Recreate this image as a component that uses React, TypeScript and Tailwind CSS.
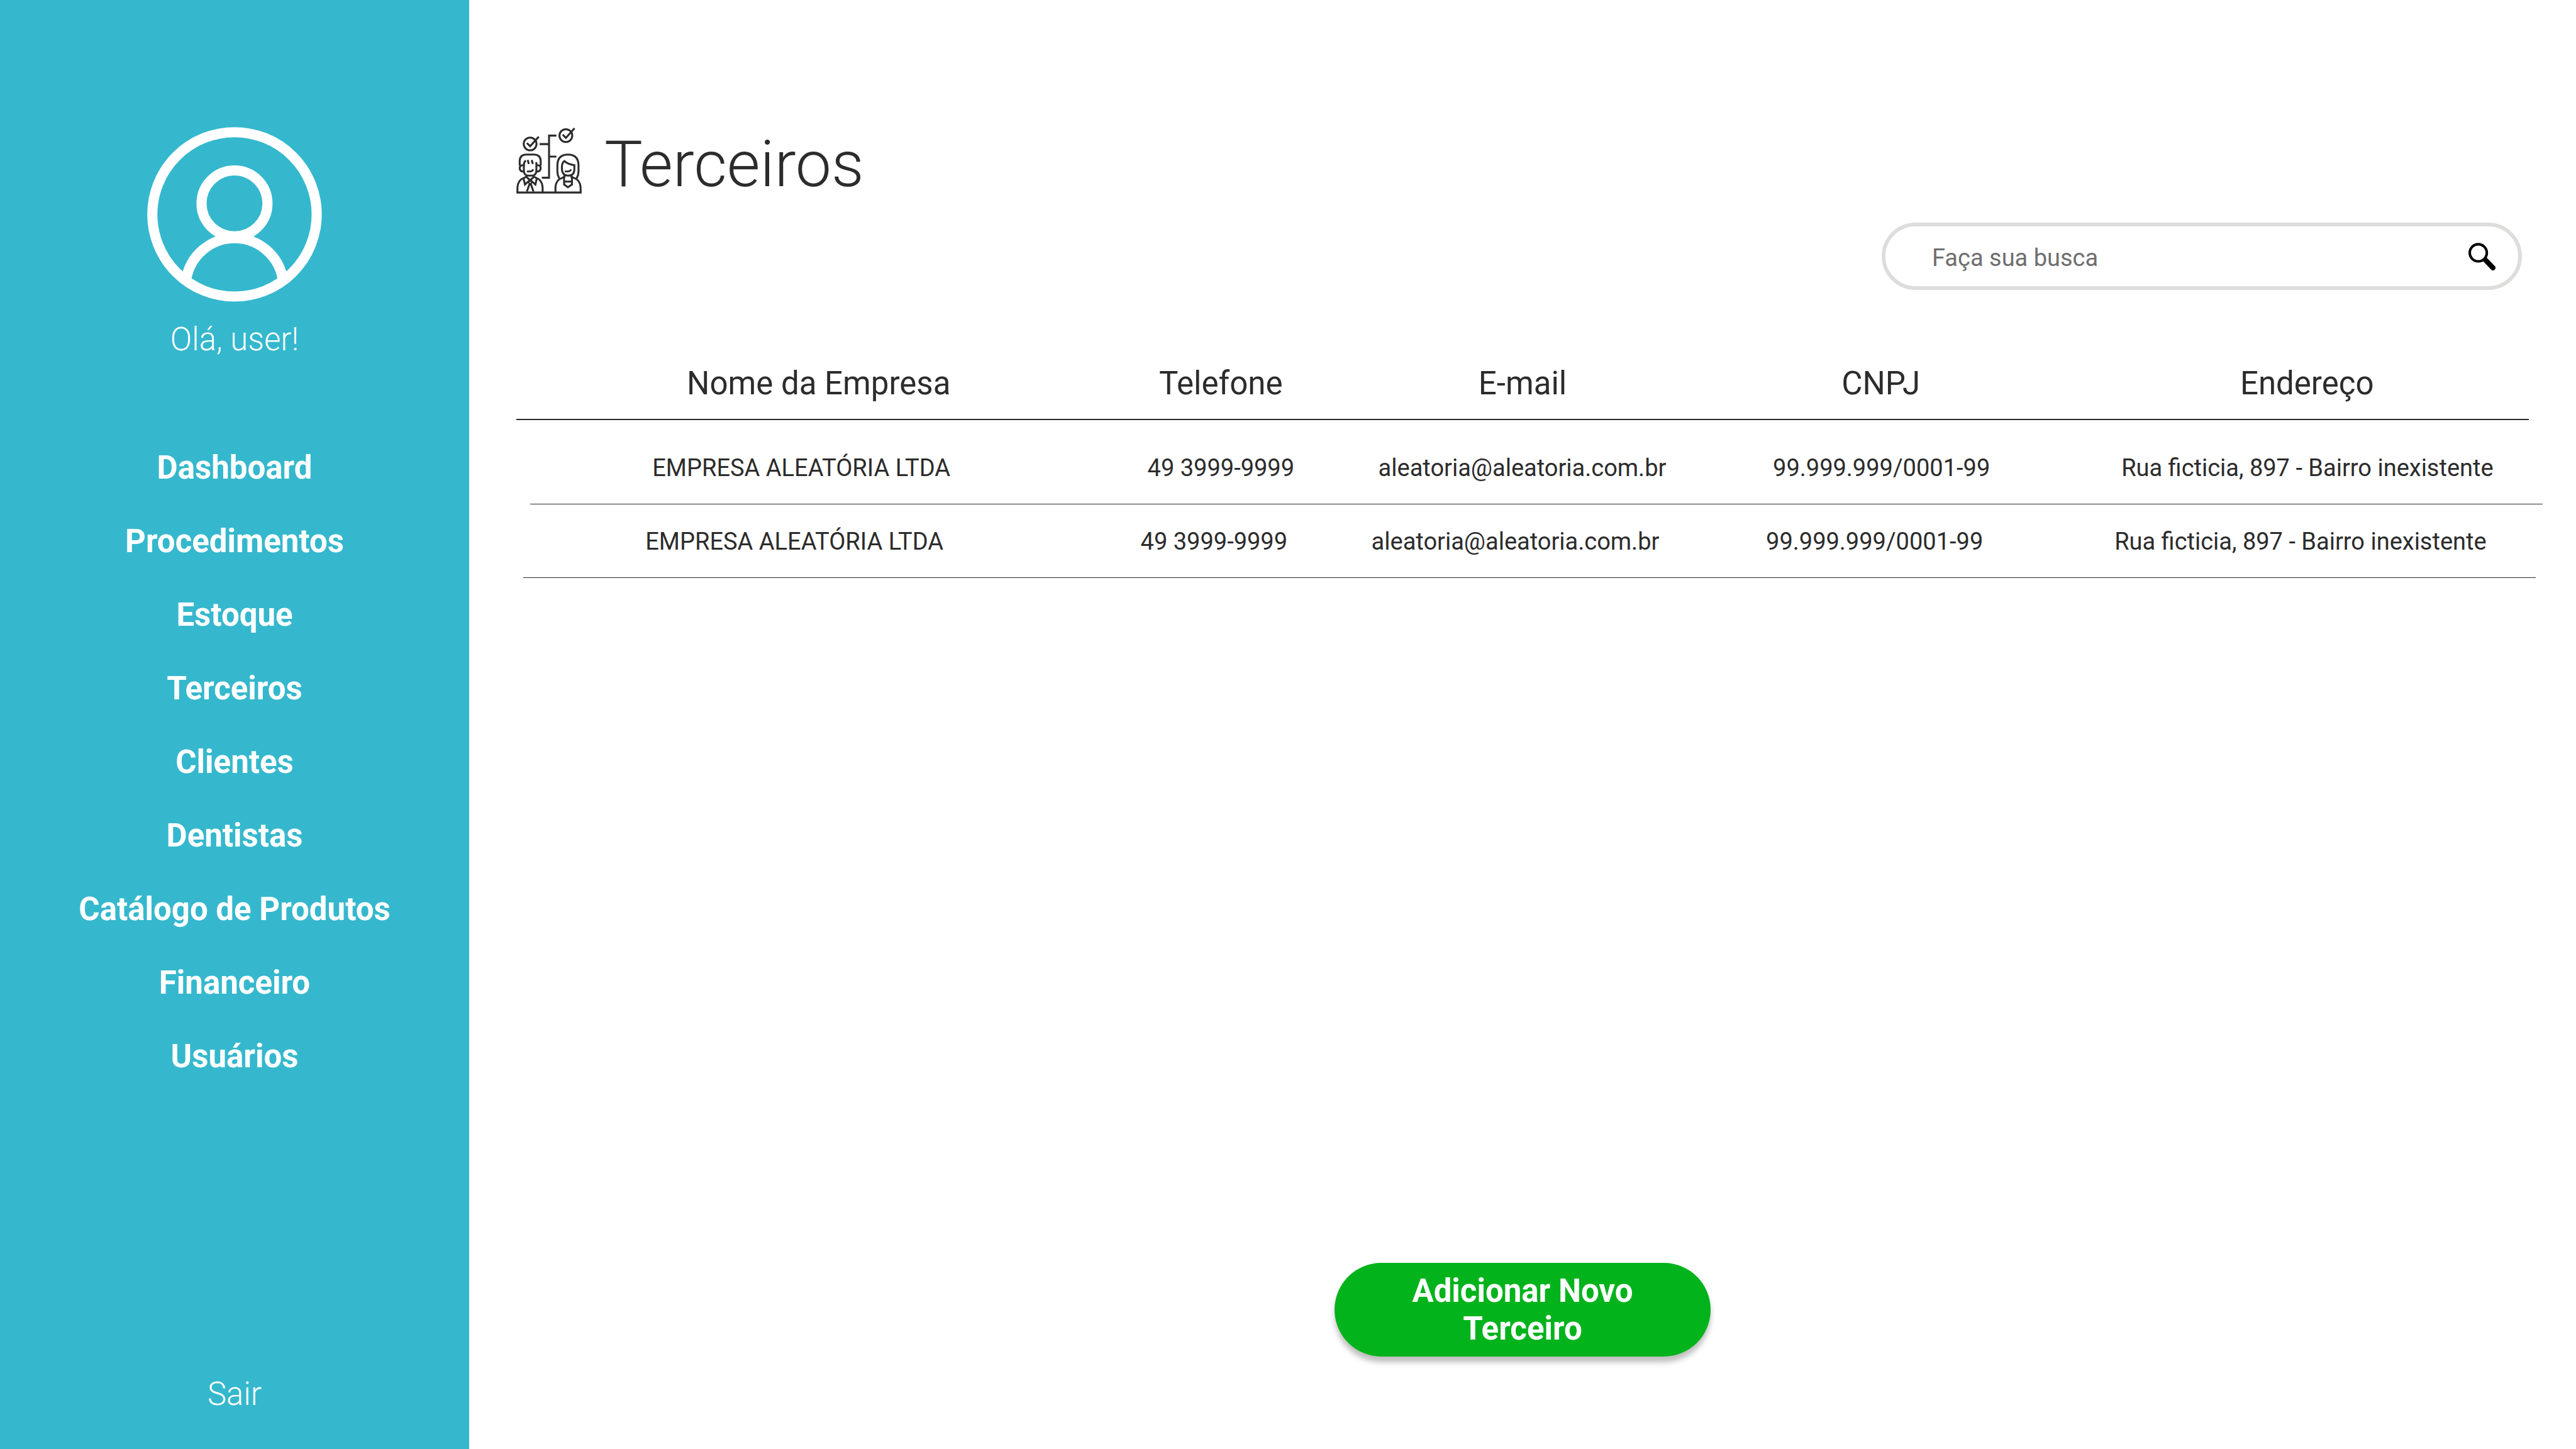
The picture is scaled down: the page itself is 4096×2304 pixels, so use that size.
import type { ReactNode } from "react";

const menu = [
  "Dashboard",
  "Procedimentos",
  "Estoque",
  "Terceiros",
  "Clientes",
  "Dentistas",
  "Catálogo de Produtos",
  "Financeiro",
  "Usuários",
];

const columns = ["Nome da Empresa", "Telefone", "E-mail", "CNPJ", "Endereço"];

const rows = [
  {
    shift: "ml-[22px] -mr-[22px]",
    cells: [
      "EMPRESA ALEATÓRIA LTDA",
      "49 3999-9999",
      "aleatoria@aleatoria.com.br",
      "99.999.999/0001-99",
      "Rua ficticia, 897 - Bairro inexistente",
    ],
  },
  {
    shift: "ml-[11px] -mr-[11px]",
    cells: [
      "EMPRESA ALEATÓRIA LTDA",
      "49 3999-9999",
      "aleatoria@aleatoria.com.br",
      "99.999.999/0001-99",
      "Rua ficticia, 897 - Bairro inexistente",
    ],
  },
];

function AvatarIcon() {
  return (
    <svg
      viewBox="75 69 1087 1087"
      className="size-[278px]"
      fill="none"
      stroke="currentColor"
      strokeWidth="63"
      aria-hidden="true"
    >
      <circle cx="618" cy="612" r="511" />
      <circle cx="618" cy="544" r="205" />
      <path d="M318 1015A304 304 0 0 1 918 1015" />
    </svg>
  );
}

function PartnersIcon() {
  return (
    <svg
      viewBox="84 72 408 411"
      className="h-[105px] w-[104px]"
      fill="none"
      stroke="currentColor"
      strokeWidth="12"
      aria-hidden="true"
    >
      {/* check marks */}
      <circle cx="170" cy="173" r="40" />
      <path d="M150 167L170 187L224 128" />
      <circle cx="393" cy="121" r="40" />
      <path d="M373 115L393 135L447 75" />
      {/* connector */}
      <path d="M334 121H288V384H243M229 174H288M288 252H334" />
      {/* man */}
      <path d="M105 308V280Q105 239 148 239H192Q236 239 236 280V308" />
      <path d="M131 306V338Q131 371 160 371H180Q209 371 209 338V286" />
      <path d="M143 276Q131 286 131 306H120Q105 308 105 324Q105 346 131 346" />
      <path d="M209 306H220Q236 308 236 324Q236 346 209 346" />
      <path d="M155 273L162 298M180 273L187 298" />
      <path d="M150 345H168Q184 345 190 332" strokeWidth="11" />
      <path d="M91 476V444Q94 398 130 386L148 377V371M248 476V444Q245 398 210 386L192 377V371" />
      <path d="M128 386L138 426L166 401M212 386L203 426L174 401" />
      <path d="M146 378L170 400L194 378M150 470L166 424H175L191 470" />
      <path d="M160 412L170 402L180 412L170 426Z" strokeWidth="8" />
      {/* woman */}
      <path d="M352 388Q340 368 340 345V307Q340 239 406 239Q472 239 472 307V345Q472 368 460 388" />
      <path d="M448 306Q405 300 384 280Q368 290 368 322Q368 371 406 371Q446 371 446 330V300" />
      <path d="M386 345H402Q420 345 426 332" strokeWidth="11" />
      <path d="M328 476V444Q330 398 368 386L384 379V366M485 476V444Q482 398 445 386L428 379V366" />
      <path d="M382 374V426L406 443L431 426V374M382 408H431" />
      {/* base */}
      <path d="M85 476H491" />
    </svg>
  );
}

function SearchIcon() {
  return (
    <svg
      viewBox="153 96 168 171"
      className="h-[44px] w-[43px]"
      fill="none"
      stroke="currentColor"
      aria-hidden="true"
    >
      <circle cx="214" cy="158" r="53" strokeWidth="16" />
      <path d="M259 203L305 251" strokeWidth="32" strokeLinecap="round" />
    </svg>
  );
}

function SideLink({ children }: { children: ReactNode }) {
  return (
    <a href="#" className="text-[51px] leading-[60px] font-bold">
      {children}
    </a>
  );
}

export default function App() {
  return (
    <div className="flex min-h-screen bg-white font-['Roboto',sans-serif] text-[#2c2c2c]">
      <aside className="flex w-[746px] shrink-0 flex-col items-center bg-[#35b8cd] pt-[202px] pb-[57px] text-white">
        <AvatarIcon />
        <p className="mt-[30px] text-[51px] leading-[60px] font-light">Olá, user!</p>
        <nav className="mt-[144px] flex flex-col items-center gap-[57px]">
          {menu.map((item) => (
            <SideLink key={item}>{item}</SideLink>
          ))}
        </nav>
        <a href="#" className="mt-auto text-[51px] leading-[60px] font-light">
          Sair
        </a>
      </aside>

      <main className="flex min-w-0 flex-1 flex-col pt-[203px] pr-[75px] pb-[147px] pl-[75px]">
        <header className="flex items-start gap-[36px]">
          <PartnersIcon />
          <h1 className="text-[102px] leading-[117px] font-light">Terceiros</h1>
        </header>

        <form
          className="mt-[34px] mr-[11px] flex h-[107px] w-[1018px] items-center self-end rounded-full border-[6px] border-[#dddedb] pr-[36px] pl-[74px]"
          onSubmit={(e) => e.preventDefault()}
        >
          <input
            type="search"
            aria-label="Faça sua busca"
            placeholder="Faça sua busca"
            className="min-w-0 flex-1 pt-1 text-[38px] leading-[46px] outline-none placeholder:text-[#6f6f6f]"
          />
          <button type="submit" aria-label="Buscar" className="text-black">
            <SearchIcon />
          </button>
        </form>

        <table className="mt-[119px] block">
          <thead className="block">
            <tr className="grid grid-cols-[810fr_470fr_490fr_650fr_706fr] border-b-2 border-[#2c2c2c] pb-[26px] pl-[76px]">
              {columns.map((name) => (
                <th key={name} scope="col" className="text-center text-[51px] leading-[60px] font-normal">
                  {name}
                </th>
              ))}
            </tr>
          </thead>
          <tbody className="block pt-[17px]">
            {rows.map((row, i) => (
              <tr
                key={i}
                className={`${row.shift} grid grid-cols-[862fr_472fr_486fr_656fr_698fr] border-b border-[#2c2c2c] pt-[36px] pr-[25px] pb-[34px]`}
              >
                {row.cells.map((cell) => (
                  <td key={cell} className="text-center text-[38px] leading-[46px] whitespace-nowrap">
                    {cell}
                  </td>
                ))}
              </tr>
            ))}
          </tbody>
        </table>

        <button
          type="button"
          className="mt-auto flex h-[149px] w-[598px] items-center justify-center self-center rounded-full bg-[#02b31c] px-[100px] text-center text-[51px] leading-[60px] font-bold text-white shadow-[0_9px_9px_rgba(0,0,0,0.25)]"
        >
          Adicionar Novo Terceiro
        </button>
      </main>
    </div>
  );
}
